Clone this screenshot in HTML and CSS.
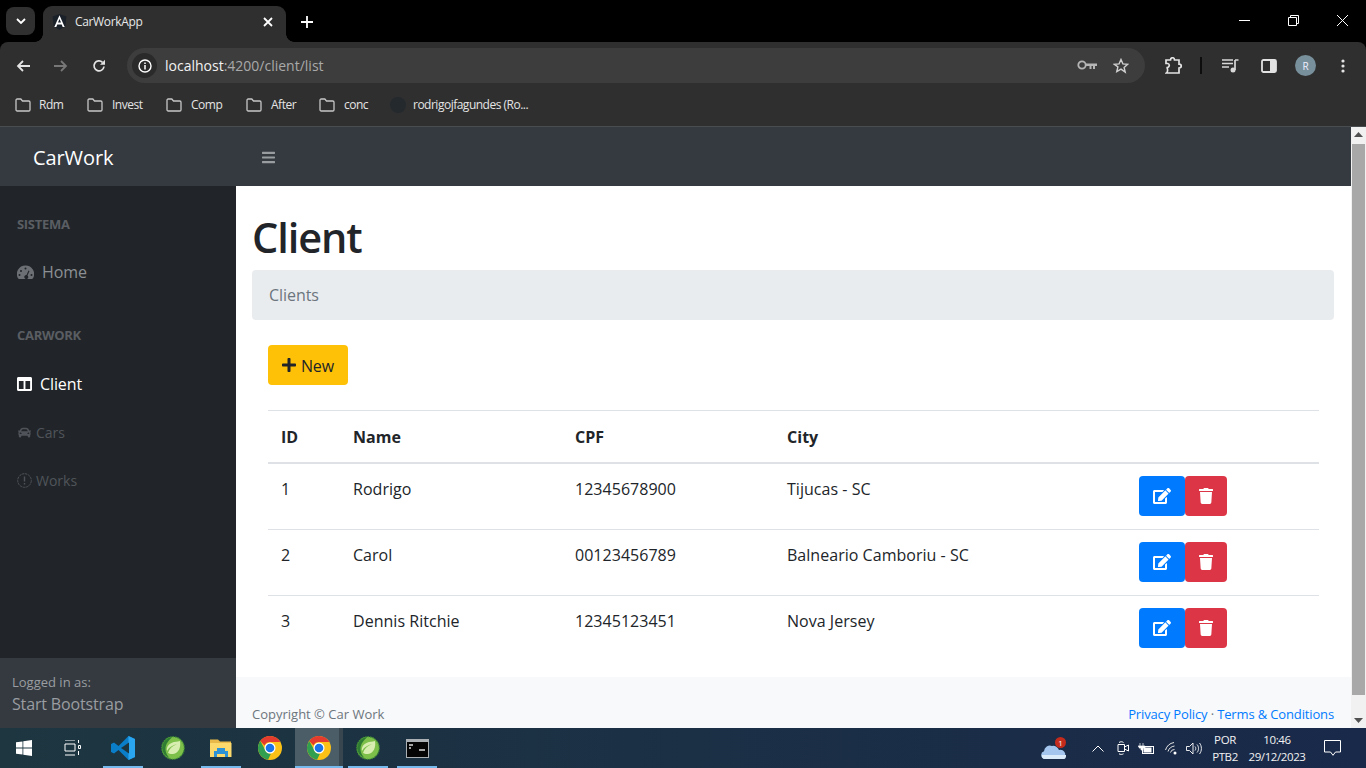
FILE: index.html
```html
<!DOCTYPE html>
<html lang="en">
<head>
<meta charset="utf-8">
<title>CarWorkApp</title>
<link rel="stylesheet" href="styles.css">
</head>
<body>
<svg class="defs" width="0" height="0">
  <defs>
    <symbol id="folder" viewBox="0 0 16 14"><path d="M1 2.200C1 1.500 1.500 1 2.200 1h3.600l1.700 2h6.300c.7 0 1.200.5 1.200 1.200v7.600c0 .7-.5 1.200-1.200 1.200H2.200C1.500 13 1 12.500 1 11.800z" fill="none" stroke="#c7c7c7" stroke-width="1.300"/></symbol>
    <symbol id="edit" viewBox="0 0 576 512"><path fill="#fff" d="M402.600 83.200l90.200 90.200c3.800 3.800 3.800 10 0 13.800L274.400 405.600l-92.800 10.300c-12.400 1.400-22.900-9.100-21.500-21.500l10.300-92.800L388.800 83.200c3.800-3.800 10-3.800 13.800 0zm162-22.900l-48.800-48.800c-15.200-15.200-39.900-15.200-55.200 0l-35.400 35.400c-3.800 3.800-3.800 10 0 13.800l90.200 90.200c3.800 3.800 10 3.800 13.800 0l35.400-35.400c15.200-15.300 15.200-40 0-55.200zM384 346.200V448H64V128h229.800c3.200 0 6.200-1.300 8.500-3.500l40-40c7.600-7.600 2.200-20.500-8.500-20.500H48C21.500 64 0 85.500 0 112v352c0 26.500 21.500 48 48 48h352c26.500 0 48-21.500 48-48V306.200c0-10.700-12.900-16-20.500-8.500l-40 40c-2.200 2.300-3.500 5.300-3.500 8.500z"/></symbol>
    <symbol id="trash" viewBox="0 0 448 512"><path fill="#fff" d="M432 32H312l-9.400-18.700A24 24 0 0 0 281.100 0H166.800a23.720 23.720 0 0 0-21.400 13.300L136 32H16A16 16 0 0 0 0 48v32a16 16 0 0 0 16 16h416a16 16 0 0 0 16-16V48a16 16 0 0 0-16-16zM53.200 467a48 48 0 0 0 47.900 45h245.800a48 48 0 0 0 47.900-45L416 128H32z"/></symbol>
    <symbol id="chrome" viewBox="0 0 24 24">
      <circle cx="12" cy="12" r="12" fill="#fbc116"/>
      <path d="M12 0a12 12 0 0 1 10.400 6H12a6 6 0 0 0-5.500 3.400L2.300 4.900A12 12 0 0 1 12 0z" fill="#e33b2e"/>
      <path d="M2.300 4.900l4.800 8.900a6 6 0 0 0 5.700 4.100L10 23.800A12 12 0 0 1 2.300 4.900z" fill="#319f4f"/>
      <circle cx="12" cy="12" r="5.500" fill="#fff"/><circle cx="12" cy="12" r="4.300" fill="#1a73e8"/>
    </symbol>
    <symbol id="spring" viewBox="0 0 24 24">
      <circle cx="12" cy="12" r="11.200" fill="#7cc04a"/>
      <path d="M1 12A11 11 0 0 1 11 1c-2 3-7 6-6.500 13 .3 3 2 6 4 8A11.500 11.500 0 0 1 1 12z" fill="#2f7d33"/>
      <circle cx="12" cy="12" r="11.300" fill="none" stroke="#3d8a35" stroke-width="1.200" stroke-dasharray="1.500 1"/>
      <path d="M19 5c1 6-1 12-7 13-2 .3-4-.5-5-1 1-4 4-7 9-9-4 1-8 3-10 7-1-5 3-8 7-9 3-.5 5-.5 6-1z" fill="#d8edb0"/>
    </symbol>
  </defs>
</svg>

<header class="tabstrip">
  <div class="tab-search"><svg width="10" height="6" viewBox="0 0 10 6"><path d="M1 1l4 4 4-4" fill="none" stroke="#fff" stroke-width="1.800"/></svg></div>
  <div class="tab">
    <svg class="tab-fav" width="15" height="16" viewBox="0 0 14 16"><path d="M7 0L0 2.500 1.100 12 7 16l5.900-4L14 2.500z" fill="#1b2129"/><path d="M7 1.200L1.800 13h2l1-2.600h4.400l1 2.600h2zM5.500 8.600L7 5l1.500 3.600z" fill="#fff" fill-rule="evenodd"/></svg>
    <span class="tab-title">CarWorkApp</span>
    <svg width="10" height="10" viewBox="0 0 10 10"><path d="M1 1l8 8M9 1l-8 8" stroke="#fff" stroke-width="1.800"/></svg>
  </div>
  <svg class="newtab" width="12" height="12" viewBox="0 0 12 12"><path d="M6 0v12M0 6h12" stroke="#fff" stroke-width="1.800"/></svg>
  <div class="winctl">
    <svg width="11" height="11" viewBox="0 0 11 11"><path d="M0 5.500h11" stroke="#fff"/></svg>
    <svg width="11" height="11" viewBox="0 0 11 11"><path d="M.5 2.500h8v8h-8zM2.500 2.500v-2h8v8h-2" fill="none" stroke="#fff"/></svg>
    <svg width="11" height="11" viewBox="0 0 11 11"><path d="M0 0l11 11M11 0L0 11" stroke="#fff"/></svg>
  </div>
</header>

<div class="toolbar">
  <svg class="tb-back" width="14" height="12" viewBox="0 0 14 12"><path d="M14 6H2M7 1L2 6l5 5" fill="none" stroke="#e3e3e3" stroke-width="1.800"/></svg>
  <svg class="tb-fwd" width="14" height="12" viewBox="0 0 14 12"><path d="M0 6h12M7 1l5 5-5 5" fill="none" stroke="#777" stroke-width="1.800"/></svg>
  <svg class="tb-reload" width="14" height="14" viewBox="0 0 14 14"><path d="M12 7.500A5 5 0 1 1 10.500 3.300" fill="none" stroke="#e3e3e3" stroke-width="1.700"/><path d="M13 .8v5H8z" fill="#e3e3e3"/></svg>
  <div class="omnibox">
    <span class="omni-info"><svg width="14" height="14" viewBox="0 0 14 14"><circle cx="7" cy="7" r="6" fill="none" stroke="#fff" stroke-width="1.400"/><path d="M7 6v4.500M7 3.400v1.500" stroke="#fff" stroke-width="1.500"/></svg></span>
    <span class="url"><span class="url-host">localhost</span>:4200/client/list</span>
    <svg class="omni-key" width="20" height="11" viewBox="0 0 20 11"><circle cx="5" cy="5" r="3.700" fill="none" stroke="#b5b5b5" stroke-width="1.800"/><path d="M8.500 3.500H20v2.500h-2v3h-2V6h-1.500v3h-2V6H8.500z" fill="#b5b5b5"/></svg>
    <svg class="omni-star" width="16" height="16" viewBox="0 0 16 16"><path d="M8 1.500l1.900 4.400 4.800.4-3.600 3.100 1.100 4.700L8 11.100l-4.200 2.500 1.100-4.700L1.300 6.300l4.800-.4z" fill="none" stroke="#d0d0d0" stroke-width="1.400"/></svg>
  </div>
  <svg class="tb-ext" width="18" height="17" viewBox="0 0 18 17"><path d="M1 3h4.500c0-3 4-3 4 0H14v4.200c3 0 3 3.800 0 3.800v5H1.500c1.500-1 1.500-5 0-5.500h1.300c2-1 2-3.500 0-4H1z" fill="none" stroke="#e3e3e3" stroke-width="1.700"/></svg>
  <span class="tb-sep"></span>
  <svg class="tb-media" width="17" height="14" viewBox="0 0 17 14"><path d="M0 1h11M0 4.500h11M0 8h7" stroke="#d8d8d8" stroke-width="1.700"/><path d="M13 1h3.500M13 1v10" stroke="#d8d8d8" stroke-width="1.700" fill="none"/><circle cx="11" cy="11" r="2.500" fill="#d8d8d8"/></svg>
  <svg class="tb-side" width="16" height="14" viewBox="0 0 16 14"><rect x="1" y="1" width="14" height="12" rx="1.500" fill="none" stroke="#e3e3e3" stroke-width="1.800"/><rect x="9" y="1" width="6" height="12" fill="#e3e3e3"/></svg>
  <span class="avatar">R</span>
  <svg class="tb-menu" width="4" height="14" viewBox="0 0 4 14"><circle cx="2" cy="2" r="1.600" fill="#e3e3e3"/><circle cx="2" cy="7" r="1.600" fill="#e3e3e3"/><circle cx="2" cy="12" r="1.600" fill="#e3e3e3"/></svg>
</div>

<nav class="bookmarks">
  <span class="bm bm-rdm"><svg width="16" height="14"><use href="#folder"/></svg>Rdm</span>
  <span class="bm bm-inv"><svg width="16" height="14"><use href="#folder"/></svg>Invest</span>
  <span class="bm bm-comp"><svg width="16" height="14"><use href="#folder"/></svg>Comp</span>
  <span class="bm bm-after"><svg width="16" height="14"><use href="#folder"/></svg>After</span>
  <span class="bm bm-conc"><svg width="16" height="14"><use href="#folder"/></svg>conc</span>
  <span class="bm bm-gh"><svg width="16" height="16" viewBox="0 0 16 16"><circle cx="8" cy="8" r="8" fill="#24292e"/></svg>rodrigojfagundes (Ro...</span>
</nav>

<div class="viewport">
  <div class="app">
    <div class="topnav">
      <div class="brand">CarWork</div>
      <svg class="bars" width="13" height="15" viewBox="0 0 448 512"><path fill="#9a9da0" d="M16 132h416c8.837 0 16-7.163 16-16V76c0-8.837-7.163-16-16-16H16C7.163 60 0 67.163 0 76v40c0 8.837 7.163 16 16 16zm0 160h416c8.837 0 16-7.163 16-16v-40c0-8.837-7.163-16-16-16H16c-8.837 0-16 7.163-16 16v40c0 8.837 7.163 16 16 16zm0 160h416c8.837 0 16-7.163 16-16v-40c0-8.837-7.163-16-16-16H16c-8.837 0-16 7.163-16 16v40c0 8.837 7.163 16 16 16z"/></svg>
    </div>
    <div class="app-body">
      <aside class="sidebar">
        <div class="side-menu">
          <div class="side-head side-head-1">SISTEMA</div>
          <div class="side-link link-home">
            <svg width="17" height="15" viewBox="0 0 17 15"><path fill-rule="evenodd" d="M8.500 0.500a8.500 8.500 0 0 0-7.300 13c.2.300.5.500.9.500h12.800c.4 0 .7-.2.900-.5A8.500 8.500 0 0 0 8.500 0.500zM8.500 2.500a1 1 0 1 1 0 2 1 1 0 0 1 0-2zM4 5a1 1 0 1 1 0 2 1 1 0 0 1 0-2zM2.500 9a1 1 0 1 1 0 2 1 1 0 0 1 0-2zM14.500 9a1 1 0 1 1 0 2 1 1 0 0 1 0-2zM11.500 5.500l1 .4-2 4.600a2 2 0 1 1-1-.4z" fill="#6c7075"/></svg>
            <span>Home</span>
          </div>
          <div class="side-head side-head-2">CARWORK</div>
          <div class="side-link link-client">
            <svg width="15" height="16" viewBox="0 0 512 512" preserveAspectRatio="none"><path fill="#fff" d="M464 32H48C21.490 32 0 53.490 0 80v352c0 26.510 21.490 48 48 48h416c26.510 0 48-21.490 48-48V80c0-26.510-21.490-48-48-48zM224 416H64V160h160v256zm224 0H288V160h160v256z"/></svg>
            <span>Client</span>
          </div>
          <div class="side-link link-dim link-cars">
            <svg width="15" height="13" viewBox="0 0 512 512"><path fill="#50545a" d="M499.990 176h-59.870l-16.640-41.600C406.380 91.630 365.570 64 319.500 64h-127c-46.060 0-86.880 27.630-103.990 70.400L71.870 176H12.010C4.200 176-1.530 183.340.370 190.910l6 24C7.700 220.250 12.500 224 18.010 224h20.070C24.650 235.730 16 252.780 16 272v48c0 16.120 6.160 30.670 16 41.930V416c0 17.670 14.330 32 32 32h32c17.670 0 32-14.330 32-32v-32h256v32c0 17.670 14.330 32 32 32h32c17.670 0 32-14.330 32-32v-54.070c9.840-11.250 16-25.800 16-41.930v-48c0-19.220-8.650-36.270-22.070-48H494c5.510 0 10.310-3.750 11.640-9.090l6-24c1.890-7.570-3.840-14.910-11.650-14.910zm-352.060-17.830c7.290-18.220 24.940-30.170 44.570-30.170h127c19.630 0 37.280 11.950 44.570 30.170L384 208H128l19.930-49.830zM96 319.800c-19.200 0-32-12.760-32-31.900S76.800 256 96 256s48 28.710 48 47.850-28.800 15.950-48 15.950zm320 0c-19.200 0-48 3.190-48-15.950S396.800 256 416 256s32 12.760 32 31.900-12.800 31.900-32 31.900z"/></svg>
            <span>Cars</span>
          </div>
          <div class="side-link link-dim link-works">
            <svg width="15" height="15" viewBox="0 0 15 15"><circle cx="7.500" cy="7.500" r="6.800" fill="none" stroke="#50545a" stroke-width="1" stroke-dasharray="2.500 .7"/><path d="M7.500 3.500v5M7.500 10v1.500" stroke="#50545a" stroke-width="1.400"/></svg>
            <span>Works</span>
          </div>
        </div>
        <div class="side-foot">
          <div class="side-foot-small">Logged in as:</div>
          <div class="side-foot-name">Start Bootstrap</div>
        </div>
      </aside>
      <main class="main">
        <div class="content">
          <h1 class="title">Client</h1>
          <div class="crumb">Clients</div>
          <div class="panel">
            <button class="btn btn-new"><svg width="14" height="16" viewBox="0 0 448 512"><path fill="#212529" d="M416 208H272V64c0-17.670-14.330-32-32-32h-32c-17.670 0-32 14.330-32 32v144H32c-17.670 0-32 14.330-32 32v32c0 17.670 14.330 32 32 32h144v144c0 17.670 14.330 32 32 32h32c17.670 0 32-14.330 32-32V304h144c17.670 0 32-14.330 32-32v-32c0-17.670-14.330-32-32-32z"/></svg><span class="btn-label">New</span></button>
            <table class="table">
              <colgroup><col class="c-id"><col class="c-name"><col class="c-cpf"><col class="c-city"><col class="c-act"></colgroup>
              <thead><tr><th>ID</th><th>Name</th><th>CPF</th><th>City</th><th></th></tr></thead>
              <tbody>
                <tr><td>1</td><td>Rodrigo</td><td>12345678900</td><td>Tijucas - SC</td><td class="acts"><button class="btn btn-edit"><svg width="18" height="16"><use href="#edit"/></svg></button><button class="btn btn-del"><svg width="14" height="16"><use href="#trash"/></svg></button></td></tr>
                <tr><td>2</td><td>Carol</td><td>00123456789</td><td>Balneario Camboriu - SC</td><td class="acts"><button class="btn btn-edit"><svg width="18" height="16"><use href="#edit"/></svg></button><button class="btn btn-del"><svg width="14" height="16"><use href="#trash"/></svg></button></td></tr>
                <tr><td>3</td><td>Dennis Ritchie</td><td>12345123451</td><td>Nova Jersey</td><td class="acts"><button class="btn btn-edit"><svg width="18" height="16"><use href="#edit"/></svg></button><button class="btn btn-del"><svg width="14" height="16"><use href="#trash"/></svg></button></td></tr>
              </tbody>
            </table>
          </div>
        </div>
        <footer class="footer">
          <span>Copyright © Car Work</span>
          <span class="foot-links"><a>Privacy Policy</a> · <a>Terms &amp; Conditions</a></span>
        </footer>
      </main>
    </div>
  </div>
  <div class="scrollbar">
    <svg width="9" height="5" viewBox="0 0 9 5"><path d="M4.500 0L9 5H0z" fill="#505050"/></svg>
    <div class="thumb"></div>
    <svg width="9" height="5" viewBox="0 0 9 5"><path d="M0 0h9L4.500 5z" fill="#505050"/></svg>
  </div>
</div>

<footer class="taskbar">
  <div class="tk tk-win"><svg width="16" height="16" viewBox="0 0 16 16"><path d="M0 2.300l6.500-.9v6.200H0zM7.300 1.300L16 0v7.600H7.300zM0 8.400h6.500v6.200L0 13.700zM7.300 8.400H16V16l-8.700-1.200z" fill="#fff"/></svg></div>
  <div class="tk tk-view"><svg width="17" height="16" viewBox="0 0 17 16"><path d="M1 0h10M1 15h10M1 4h10v7H1zM14.500 0v3M14.500 5.500h2v3h-2zM14.500 11v4" fill="none" stroke="#fff" stroke-width="1"/></svg></div>
  <div class="tk tk-on tk-code"><svg width="24" height="24" viewBox="0 0 24 24"><path d="M17.500 0L24 3v18l-6.500 3-10-10-4.500 3.500L0 16V8l3-1.500L7.500 10z" fill="#0a7ec8"/><path d="M17.500 0L24 3v18l-6.500 3z" fill="#2aa5ef"/><path d="M18 6.500L10 12l8 5.500z" fill="#1d353f"/></svg></div>
  <div class="tk tk-spring"><svg width="24" height="24"><use href="#spring"/></svg></div>
  <div class="tk tk-on tk-files"><svg width="22" height="20" viewBox="0 0 22 20"><path d="M0 1.500h8l2 2h11v15H0z" fill="#e9b949"/><path d="M0 5h21.500v14H0z" fill="#fbd96d"/><path d="M7 10h8v3h3v6h-3v-3H7v3H4v-6h3z" fill="#2d93d6"/></svg></div>
  <div class="tk tk-chrome1"><svg width="24" height="24"><use href="#chrome"/></svg></div>
  <div class="tk tk-on tk-active"><svg width="24" height="24"><use href="#chrome"/></svg></div>
  <div class="tk tk-on tk-spring2"><svg width="24" height="24"><use href="#spring"/></svg></div>
  <div class="tk tk-on tk-cmd"><svg width="23" height="19" viewBox="0 0 23 19"><rect width="23" height="19" fill="#aab0b4"/><rect x="1" y="3" width="21" height="15" fill="#050505"/><path d="M3 6h4M3 9h2M13 11h6" stroke="#dcdcdc" stroke-width="1.500"/></svg></div>
  <div class="tray">
    <span class="weather">
      <svg width="26" height="24" viewBox="0 0 26 24"><path d="M4 23a4 4 0 0 1-1-7.800A6 6 0 0 1 11 10a6 6 0 0 1 7 4 4.500 4.500 0 0 1 3 9z" fill="#a4c6ee"/><path d="M1 19h24v1.500a2.500 2.500 0 0 1-3 2.500H4a3 3 0 0 1-3-4z" fill="#dcebfa"/></svg>
      <span class="badge">1</span>
    </span>
    <svg class="tr-up" width="12" height="7" viewBox="0 0 12 7"><path d="M.5 6.500L6 1l5.500 5.500" fill="none" stroke="#fff"/></svg>
    <svg class="tr-cam" width="12" height="14" viewBox="0 0 12 14"><path d="M1 3.500h6.500v7H1zM7.500 6l4-2v6l-4-2M2 1.500c1.500-1 3-1 4.500 0M2 12.800c1.500 .8 3 .8 4.500 0" fill="none" stroke="#fff"/></svg>
    <svg class="tr-bat" width="16" height="11" viewBox="0 0 16 11"><path d="M2 0v3M5 0v3M0 3h7v2H5v2H3V5H1" fill="#fff" stroke="#fff" stroke-width=".7"/><rect x="4.500" y="3.500" width="11" height="7" fill="none" stroke="#fff"/><rect x="5.500" y="4.500" width="8" height="5" fill="#fff"/></svg>
    <svg class="tr-wifi" width="13" height="13" viewBox="0 0 13 13"><path d="M.5 8A11 11 0 0 1 9 .5M3 9.500A8 8 0 0 1 9.500 4M5.500 10.500A4 4 0 0 1 9.500 7.500" fill="none" stroke="#e6e6e6"/><circle cx="10" cy="11" r="1.500" fill="#fff"/></svg>
    <svg class="tr-vol" width="16" height="13" viewBox="0 0 16 13"><path d="M.5 4.500h3L7 1v11L3.500 8.500h-3zM9 4.500c1 1 1 3 0 4M11 2.500c2 2 2 6 0 8M13.500 1c2.500 3 2.500 8 0 11" fill="none" stroke="#fff" stroke-width=".9"/></svg>
    <span class="lang"><span>POR</span><span>PTB2</span></span>
    <span class="clock"><span>10:46</span><span>29/12/2023</span></span>
    <svg class="tr-notif" width="17" height="16" viewBox="0 0 17 16"><path d="M.5.500h16v11.500h-5L9 15.300 6.500 12h-6z" fill="none" stroke="#fff"/></svg>
  </div>
</footer>
</body>
</html>
```

FILE: styles.css
```css
* { box-sizing: border-box; }
html, body { margin: 0; height: 768px; overflow: hidden; }
body { display: flex; flex-direction: column; width: 1366px; font-family: "Open Sans", "Noto Sans", sans-serif; background: #000; }
.defs { position: absolute; }

/* tab strip */
.tabstrip { height: 42px; flex: none; display: flex; align-items: flex-start; background: #000; color: #fff; padding: 6px 0 0 6px; }
.tab-search { width: 29px; height: 28px; margin-top: 1px; background: #303030; border-radius: 8px; display: flex; align-items: center; justify-content: center; }
.tab { position: relative; width: 243px; height: 36px; margin-left: 8px; background: #2f2f2f; border-radius: 9px 9px 0 0; display: flex; align-items: center; padding: 0 13px 5px 9px; }
.tab::before, .tab::after { content: ""; position: absolute; bottom: 0; width: 8px; height: 8px; }
.tab::before { left: -8px; background: radial-gradient(circle at 0 0, transparent 7.500px, #2f2f2f 8px); }
.tab::after { right: -8px; background: radial-gradient(circle at 100% 0, transparent 7.500px, #2f2f2f 8px); }
.tab-fav { flex: none; }
.tab-title { flex: 1; margin-left: 8px; font-size: 12px; letter-spacing: -.35px; color: #e8e8e8; }
.newtab { margin: 10px 0 0 15px; }
.winctl { margin-left: auto; margin-top: 9px; display: flex; gap: 38px; padding-right: 18px; }

/* toolbar */
.toolbar { height: 42px; flex: none; background: #2f2f2f; display: flex; align-items: center; color: #fff; border-radius: 8px 8px 0 0; padding-top: 5px; }
.tb-back { margin-left: 16px; }
.tb-fwd { margin-left: 24px; }
.tb-reload { margin-left: 24px; }
.omnibox { margin-left: 21px; width: 1018px; height: 35px; border-radius: 18px; background: #3d3d3d; display: flex; align-items: center; padding: 0 16px 0 5px; }
.omni-info { width: 25px; height: 25px; border-radius: 50%; background: #2a2a2a; display: flex; align-items: center; justify-content: center; }
.url { margin-left: 8px; font-size: 14px; letter-spacing: 0; color: #a9a9a9; flex: 1; }
.url-host { color: #f2f2f2; }
.omni-key { margin-right: 1px; }
.omni-star { margin-left: 15px; }
.tb-ext { margin-left: 20px; }
.tb-sep { width: 2px; height: 17px; background: #0d0d0d; margin-left: 17px; }
.tb-media { margin-left: 20px; }
.tb-side { margin-left: 22px; }
.avatar { margin-left: 18px; width: 21px; height: 21px; border-radius: 50%; background: #78909c; color: #eef; font-size: 10px; display: flex; align-items: center; justify-content: center; }
.tb-menu { margin-left: 25px; }

/* bookmarks */
.bookmarks { height: 43px; flex: none; background: #2f2f2f; display: flex; align-items: center; color: #e4e4e4; font-size: 12px; letter-spacing: -.5px; border-bottom: 1px solid #4a4d50; padding: 0 0 1px 15px; }
.bm { display: flex; align-items: center; gap: 9px; }
.bm-rdm { width: 72px; gap: 8px; }
.bm-inv { width: 79px; }
.bm-comp { width: 80px; }
.bm-after { width: 73px; }
.bm-conc { width: 71px; }
.bm-gh { gap: 7px; }

/* page */
.viewport { height: 601px; flex: none; display: flex; background: #fff; }
.app { width: 1351px; display: flex; flex-direction: column; }
.topnav { height: 59px; flex: none; background: #343a40; display: flex; align-items: center; }
.brand { width: 236px; padding: 2px 0 0 33px; font-size: 20px; color: #fff; letter-spacing: -.1px; }
.bars { margin: 1px 0 0 26px; }
.app-body { flex: 1; display: flex; min-height: 0; }

.sidebar { width: 236px; flex: none; background: #212529; display: flex; flex-direction: column; }
.side-menu { flex: 1; padding-left: 17px; }
.side-head { font-size: 13px; font-weight: 700; color: #5a5e63; letter-spacing: -.3px; line-height: 16px; }
.side-head-1 { margin-top: 30px; }
.side-head-2 { margin-top: 43px; }
.side-link { display: flex; align-items: center; font-size: 16px; letter-spacing: -.1px; color: #8c9094; height: 24px; gap: 8px; }
.link-home { margin-top: 28px; }
.link-client { margin-top: 29px; color: #fff; }
.link-cars { margin-top: 24px; }
.link-works { margin-top: 24px; }
.link-dim { color: #50545a; font-size: 14px; letter-spacing: 0; gap: 4px; }
.side-foot { height: 70px; flex: none; background: #343a40; padding: 15px 0 0 12px; color: #9a9da1; }
.side-foot-small { font-size: 13px; letter-spacing: 0; line-height: 19px; }
.side-foot-name { font-size: 16px; letter-spacing: -.15px; line-height: 24px; }

.main { flex: 1; display: flex; flex-direction: column; min-width: 0; }
.content { flex: 1; padding: 21px 17px 0 16px; color: #212529; min-height: 0; }
.title { margin: 0 0 2px; font-size: 41.500px; font-weight: 600; line-height: 61px; letter-spacing: -1.100px; }
.crumb { height: 50px; background: #e9ecef; border-radius: 4px; padding: 0 17px; display: flex; align-items: center; font-size: 16px; letter-spacing: -.05px; color: #6c757d; }
.panel { padding: 25px 15px 0 16px; }
.btn { border: 0; border-radius: 4px; font: inherit; display: flex; align-items: center; justify-content: center; padding: 0; }
.btn-new { width: 80px; height: 40px; background: #ffc107; font-size: 16px; letter-spacing: -.1px; color: #212529; gap: 5px; }
.btn-label { padding-top: 1px; }
.table { width: 1051px; margin-top: 25px; border-collapse: separate; border-spacing: 0; table-layout: fixed; font-size: 16px; letter-spacing: .03px; }
.c-id { width: 72px; }
.c-name { width: 222px; }
.c-cpf { width: 212px; }
.c-city { width: 340px; }
.table th { height: 54px; padding: 0 13px; text-align: left; font-weight: 700; border-top: 1px solid #dee2e6; border-bottom: 2px solid #dee2e6; vertical-align: middle; }
.table td { height: 66px; padding: 13px 13px 0; vertical-align: top; border-bottom: 1px solid #dee2e6; line-height: 24px; }
.table tr:last-child td { border-bottom: 0; }
.table td.acts { padding: 12px 0 0 25px; }
.acts .btn { display: inline-flex; height: 40px; vertical-align: top; }
.btn-edit { width: 46px; background: #007bff; }
.btn-del { width: 42px; background: #dc3545; }
.footer { height: 51px; flex: none; background: #f8f9fa; padding: 0 17px 1px 16px; display: flex; justify-content: space-between; align-items: flex-end; font-size: 13px; letter-spacing: 0; color: #6c757d; line-height: 26px; }
.foot-links { letter-spacing: -.14px; }
.foot-links a { color: #007bff; }

.scrollbar { width: 15px; flex: none; background: #f1f1f1; display: flex; flex-direction: column; align-items: center; justify-content: space-between; padding: 5px 0; }
.thumb { flex: 1; width: 13px; background: #a8a8a8; margin: 7px 0 23px; }

/* taskbar */
.taskbar { height: 40px; flex: none; display: flex; align-items: center; background: linear-gradient(90deg, #1d3640, #19294a 100%); color: #fff; }
.tk { height: 40px; width: 50px; display: flex; align-items: center; justify-content: center; position: relative; flex: none; }
.tk-win { width: 48px; }
.tk-view { padding-right: 2px; }
.tk-spring { width: 49px; }
.tk-files, .tk-cmd { width: 48px; }
.tk-on::after { content: ""; position: absolute; left: 5px; right: 5px; bottom: 0; height: 2px; background: #76b9ed; }
.tk-files::after, .tk-cmd::after { left: 4px; right: 4px; }
.tk-active { width: 48px; background: linear-gradient(90deg, #4b5e67 44px, #38474f 44px); }
.tk-active::after { left: 0; right: 0; }
.tray { margin-left: auto; display: flex; align-items: center; height: 40px; }
.weather { position: relative; display: flex; width: 26px; }
.badge { position: absolute; left: 14px; top: 1px; width: 11px; height: 11px; border-radius: 50%; background: #c42b1c; font-size: 8px; display: flex; align-items: center; justify-content: center; }
.tr-up { margin-left: 25px; }
.tr-cam { margin-left: 13px; }
.tr-bat { margin-left: 9px; }
.tr-wifi { margin-left: 11px; }
.tr-vol { margin-left: 8px; }
.lang, .clock { display: flex; flex-direction: column; align-items: center; font-size: 11.500px; letter-spacing: -.4px; line-height: 17px; color: #f2f2f2; }
.lang { margin-left: 6px; width: 34px; }
.clock { margin-left: 3px; width: 64px; }
.tr-notif { margin: 0 25px 0 15px; }
```
